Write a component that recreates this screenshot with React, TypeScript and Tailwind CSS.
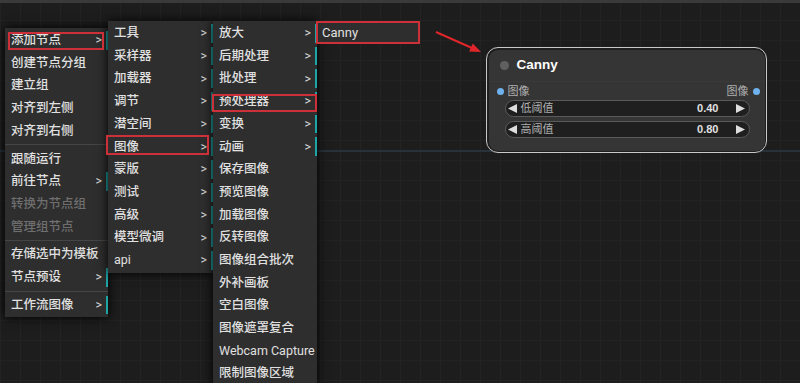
import React from "react";

type Item = { l: string; s?: boolean; d?: boolean } | "sep";

const menu1: Item[] = [
  { l: "添加节点", s: true },
  { l: "创建节点分组" },
  { l: "建立组" },
  { l: "对齐到左侧" },
  { l: "对齐到右侧" },
  "sep",
  { l: "跟随运行" },
  { l: "前往节点", s: true },
  { l: "转换为节点组", d: true },
  { l: "管理组节点", d: true },
  "sep",
  { l: "存储选中为模板" },
  { l: "节点预设", s: true },
  "sep",
  { l: "工作流图像", s: true },
];

const menu2: Item[] = ["工具", "采样器", "加载器", "调节", "潜空间", "图像", "蒙版", "测试", "高级", "模型微调", "api"].map(
  (l) => ({ l, s: true })
);

const menu3: Item[] = [
  { l: "放大", s: true },
  { l: "后期处理", s: true },
  { l: "批处理", s: true },
  { l: "预处理器", s: true },
  { l: "变换", s: true },
  { l: "动画", s: true },
  { l: "保存图像" },
  { l: "预览图像" },
  { l: "加载图像" },
  { l: "反转图像" },
  { l: "图像组合批次" },
  { l: "外补画板" },
  { l: "空白图像" },
  { l: "图像遮罩复合" },
  { l: "Webcam Capture" },
  { l: "限制图像区域" },
];

const isLatin = (s: string) => /^[A-Za-z ]+$/.test(s);

function Menu({ items, className }: { items: Item[]; className: string }) {
  return (
    <div className={`absolute bg-[#2e2e2e] shadow-[0_0_10px_black] pt-[1px] pb-[1px] ${className}`}>
      {items.map((it, i) =>
        it === "sep" ? (
          <div key={i} className="h-[5px] flex items-center">
            <div className="h-px w-full bg-[#454545]" />
          </div>
        ) : (
          <div key={i} className="h-[22.7px] py-[2px] pl-[1px]">
            <div
              className={`relative h-full flex items-center pl-[5px] leading-none whitespace-nowrap ${
                it.s ? "border-r-2 border-[#1ea4a4]" : ""
              } ${it.d ? "text-[#6f6f6f]" : "text-[#e0e0e0]"} ${isLatin(it.l) ? "font-normal" : ""}`}
            >
              {it.l}
              {it.s && (
                <span className="absolute right-[4px] top-1/2 -translate-y-1/2 text-[#d8d8d8] font-normal">&gt;</span>
              )}
            </div>
          </div>
        )
      )}
    </div>
  );
}

function Tri({ dir }: { dir: "l" | "r" }) {
  return (
    <svg width="10" height="9" viewBox="0 0 10 9" className="shrink-0">
      {dir === "l" ? <polygon points="0,4.5 9,0 9,9" fill="#dddddd" /> : <polygon points="10,4.5 1,0 1,9" fill="#dddddd" />}
    </svg>
  );
}

function Widget({ label, value }: { label: string; value: string }) {
  return (
    <div className="mx-[16px] mr-[15px] h-[17px] rounded-full border border-[#5a5a5a] bg-[#1f1f1f] flex items-center pl-[2px] pr-[4px] text-[11px] leading-none">
      <Tri dir="l" />
      <span className="ml-[3px] text-[#b0b0b0]">{label}</span>
      <span className="ml-auto text-[#e0e0e0] font-bold font-['Liberation_Sans',sans-serif]">{value}</span>
      <span className="ml-[16px]">
        <Tri dir="r" />
      </span>
    </div>
  );
}

export default function App() {
  return (
    <div className="relative w-[800px] h-[383px] overflow-hidden bg-[#1d1d1d] text-[12.5px] font-medium font-['Roboto','Noto_Sans_CJK_SC',sans-serif]">
      {/* grid */}
      <div className="absolute inset-0 bg-[linear-gradient(to_right,#232323_1px,transparent_1px),linear-gradient(to_bottom,#222222_1px,transparent_1px)] bg-[size:20px_20px]" />
      {/* top strip */}
      <div className="absolute left-0 top-0 w-full h-[3px] bg-[#3a3a3a]" />
      {/* horizontal link line */}
      <div className="absolute left-0 top-[150px] w-full h-[2px] bg-[#28323b]" />

      {/* Node */}
      <div className="absolute left-[486px] top-[47px] w-[281px] h-[106px] rounded-[12px] border-[1.5px] border-[#c8c8c8] bg-[#1f1f1f] p-[1.5px]">
        <div className="w-full h-full rounded-[9px] bg-[#353535] flex flex-col">
          <div className="h-[32px] flex items-center pl-[11px] gap-[8px] border-b border-[#3a3a3a]">
            <div className="w-[9px] h-[9px] rounded-full bg-[#606060]" />
            <span className="text-white font-bold text-[13.5px] leading-none font-['Liberation_Sans',sans-serif]">Canny</span>
          </div>
          <div className="h-[17px] pt-[2px] flex items-center pl-[8px] pr-[5px] text-[11px] leading-none text-[#b0b0b0] font-normal">
            <div className="w-[7px] h-[7px] rounded-full bg-[#6fb1ec]" />
            <span className="ml-[4px]">图像</span>
            <span className="ml-auto mr-[4px]">图像</span>
            <div className="w-[7px] h-[7px] rounded-full bg-[#6fb1ec]" />
          </div>
          <div className="mt-[1px] font-normal">
            <Widget label="低阈值" value="0.40" />
          </div>
          <div className="mt-[4px] font-normal">
            <Widget label="高阈值" value="0.80" />
          </div>
        </div>
      </div>

      {/* Arrow */}
      <svg className="absolute left-[430px] top-[25px]" width="60" height="35" viewBox="0 0 60 35">
        <line x1="6" y1="7" x2="42" y2="23" stroke="#e0262a" strokeWidth="2" />
        <polygon points="51,27 39.1,26.6 42.8,18.4" fill="#e0262a" />
      </svg>

      {/* Menus */}
      <Menu items={menu1} className="left-[5px] top-[28px] w-[103px]" />
      <Menu items={menu2} className="left-[108px] top-[21px] w-[105px]" />
      <Menu items={menu3} className="left-[213px] top-[21px] w-[104px]" />
      <div className="absolute left-[316px] top-[21px] w-[104px] h-[23px] bg-[#2e2e2e] flex items-center pl-[6px] text-[#e0e0e0] text-[13px] font-normal leading-none">
        Canny
      </div>

      {/* Red annotation boxes */}
      <div className="absolute left-[8px] top-[32px] w-[96px] h-[18px] border-2 border-[#cc3038]" />
      <div className="absolute left-[106px] top-[135px] w-[103px] h-[20px] border-2 border-[#cc3038]" />
      <div className="absolute left-[212px] top-[94px] w-[105px] h-[18px] border-2 border-[#cc3038]" />
      <div className="absolute left-[316px] top-[21px] w-[104px] h-[23px] border-2 border-[#cc3038]" />
    </div>
  );
}
